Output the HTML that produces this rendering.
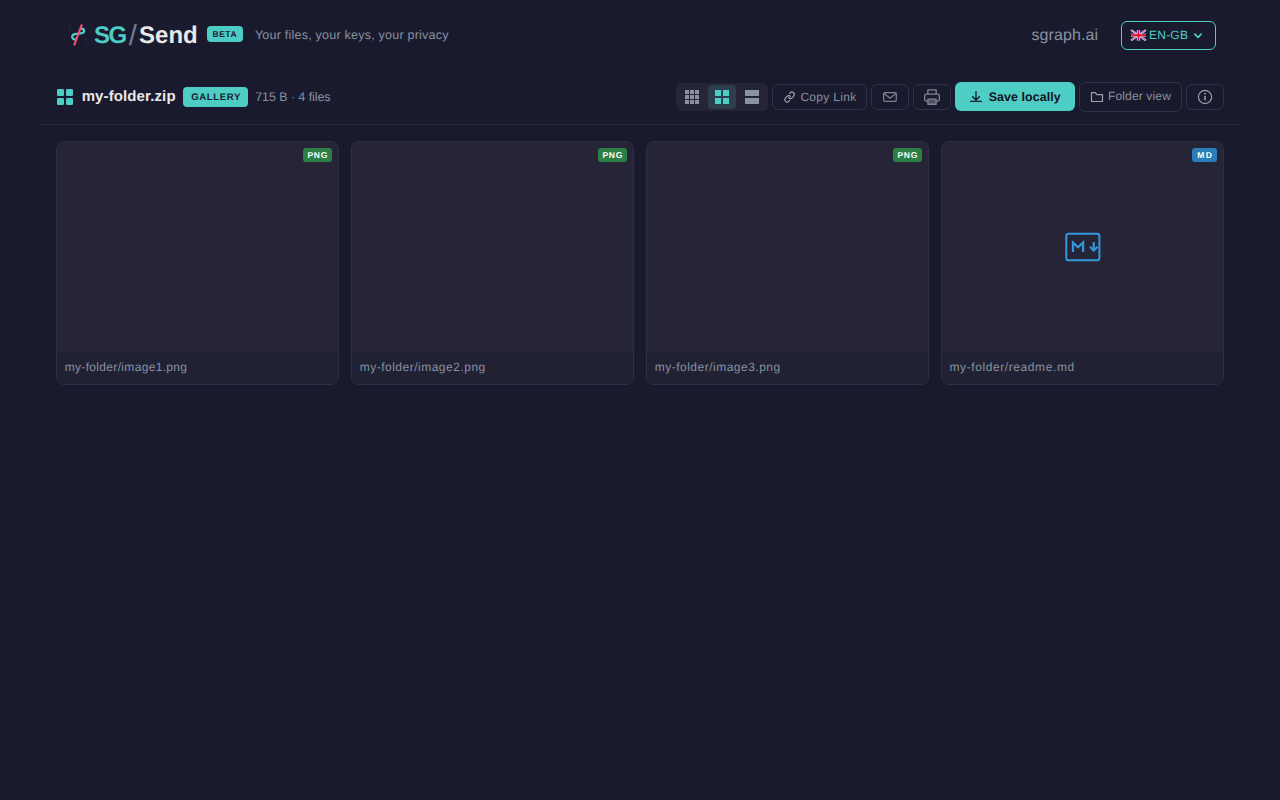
<!DOCTYPE html>
<html lang="en-GB">
<head>
<meta charset="utf-8">
<title>SG/Send</title>
<style>
*{box-sizing:border-box;margin:0;padding:0}
html,body{width:1280px;height:800px;overflow:hidden}
body{background:#1a1a2e;color:#8892a0;font-family:"Liberation Sans",sans-serif;position:relative;text-rendering:geometricPrecision}
.abs{position:absolute}
.t{position:absolute;white-space:nowrap;line-height:1;display:block}
svg{display:block;position:absolute;overflow:visible}
#beta{left:207px;top:26px;width:36px;height:16px;background:#4ecdc4;border-radius:4px}
#lang{left:1121px;top:21px;width:95px;height:29px;border:1px solid #4ecdc4;border-radius:6px}
#gallery{left:183px;top:87px;width:65px;height:20px;background:#4ecdc4;border-radius:4px}
#viewsw{left:676px;top:83px;width:92px;height:28px;background:#252537;border-radius:6px}
#viewact{left:708px;top:85px;width:28px;height:24px;background:#2c3e4c;border-radius:4px}
.btn{border:1px solid #303146;border-radius:6px}
#copy{left:772px;top:84px;width:95px;height:26px}
#mail{left:871px;top:84px;width:38px;height:26px}
#print{left:913px;top:84px;width:38px;height:26px}
#save{left:955px;top:82px;width:120px;height:29px;background:#4ecdc4;border-radius:6px}
#folder{left:1079px;top:82px;width:103px;height:30px}
#info{left:1186px;top:84px;width:38px;height:26px}
#divider{left:40px;top:124px;width:1200px;height:1px;background:#2b2b40}
.card{position:absolute;top:141px;width:283px;height:244px;border:1px solid #2e2e44;border-radius:8px;background:#252537;overflow:hidden}
.card .foot{position:absolute;left:0;right:0;bottom:0;height:32px;background:#212134}
.tag{position:absolute;top:148px;height:14px;border-radius:3px}
.tag.png{background:#2d8045;width:29px}
.tag.md{background:#2980b9;width:25px;left:1192px}
</style>
</head>
<body>
<!-- header -->
<svg style="left:62px;top:19px" width="32" height="32" viewBox="0 0 32 32" fill="none">
<rect x="2.500" y="2.500" width="27" height="27" rx="6" stroke="#1c1c32" stroke-width="1"/>
<path d="M18.800 10A2.200 2.200 0 1 1 19.900 14.100L12.800 15.200A2.600 2.600 0 1 0 14.100 20.050" stroke="#4ecdc4" stroke-width="2.300" stroke-linecap="round" stroke-linejoin="round"/>
<line x1="19.900" y1="5.400" x2="12.100" y2="26.400" stroke="#fb4d6b" stroke-width="2"/>
<g fill="#2c2d43"><rect x="7" y="7.400" width="2" height="1.400"/><rect x="7" y="11" width="2" height="1.400"/><rect x="23" y="19.900" width="2" height="1.400"/><rect x="23" y="23.200" width="2" height="1.400"/></g>
</svg>
<span class="t " id="t-sg" style="left:94.03px;top:24.00px;font-size:24px;letter-spacing:-1.632px;font-weight:700;color:#4ecdc4;">SG</span><span class="t " id="t-slash" style="left:128.65px;top:22.00px;font-size:29px;letter-spacing:5.065px;color:#747d8d;">/</span><span class="t " id="t-send" style="left:139.09px;top:24.00px;font-size:24px;letter-spacing:-0.018px;font-weight:700;color:#e8e8e8;">Send</span>
<div class="abs" id="beta"></div><span class="t " id="t-beta" style="left:212.47px;top:30.00px;font-size:8.5px;letter-spacing:0.538px;font-weight:700;color:#1a1a2e;">BETA</span>
<span class="t " id="t-tagline" style="left:254.92px;top:29.00px;font-size:12.5px;letter-spacing:0.230px;">Your files, your keys, your privacy</span>
<span class="t " id="t-site" style="left:1031.56px;top:28.00px;font-size:16px;letter-spacing:0.073px;">sgraph.ai</span>
<div class="abs" id="lang"></div>
<svg style="left:1131.100px;top:29.600px" width="15" height="10.500" viewBox="0 0 15 10.800" preserveAspectRatio="none"><g><rect width="15" height="10.800" fill="#0c2486"/><path d="M0 0L15 10.800M15 0L0 10.800" stroke="#f3dfe6" stroke-width="1.900"/><path d="M0 0L15 10.800M15 0L0 10.800" stroke="#e2506a" stroke-width=".9"/><path d="M7.500 0V10.800M0 5.400H15" stroke="#f6e6ea" stroke-width="3.200"/><path d="M0 5.400H15" stroke="#d8102a" stroke-width="2.200"/><path d="M7.500 0V10.800" stroke="#d8102a" stroke-width="1.700"/></g></svg>
<span class="t " id="t-lang" style="left:1149.10px;top:29.00px;font-size:12px;letter-spacing:0.197px;color:#4ecdc4;">EN-GB</span>
<svg style="left:1193px;top:32px" width="10" height="8" viewBox="0 0 10 8" fill="none"><path d="M1.800 2.200L5 5.300L8.200 2.200" stroke="#4ecdc4" stroke-width="1.700" stroke-linecap="round" stroke-linejoin="round"/></svg>

<!-- toolbar -->
<svg style="left:57px;top:89px" width="16" height="16" viewBox="0 0 16 16" fill="#4ecdc4"><rect x="0" y="0" width="7" height="7" rx="1.300"/><rect x="9" y="0" width="7" height="7" rx="1.300"/><rect x="0" y="9" width="7" height="7" rx="1.300"/><rect x="9" y="9" width="7" height="7" rx="1.300"/></svg>
<span class="t " id="t-fname" style="left:81.67px;top:89.00px;font-size:15px;letter-spacing:0.115px;font-weight:700;color:#e8e8e8;">my-folder.zip</span>
<div class="abs" id="gallery"></div><span class="t " id="t-gallery" style="left:191.24px;top:93.00px;font-size:9.6px;letter-spacing:0.610px;font-weight:700;color:#1a1a2e;">GALLERY</span>
<span class="t " id="t-meta" style="left:255.22px;top:91.00px;font-size:12.5px;letter-spacing:-0.078px;">715 B · 4 files</span>

<div class="abs" id="viewsw"></div><div class="abs" id="viewact"></div>
<svg style="left:685px;top:90px" width="14" height="14" viewBox="0 0 14 14" fill="#8b92a3"><rect x="0" y="0" width="4" height="4"/><rect x="5" y="0" width="4" height="4"/><rect x="10" y="0" width="4" height="4"/><rect x="0" y="5" width="4" height="4"/><rect x="5" y="5" width="4" height="4"/><rect x="10" y="5" width="4" height="4"/><rect x="0" y="10" width="4" height="4"/><rect x="5" y="10" width="4" height="4"/><rect x="10" y="10" width="4" height="4"/></svg>
<svg style="left:715px;top:90px" width="14" height="14" viewBox="0 0 14 14" fill="#4ecdc4"><rect x="0" y="0" width="6" height="6"/><rect x="8" y="0" width="6" height="6"/><rect x="0" y="8" width="6" height="6"/><rect x="8" y="8" width="6" height="6"/></svg>
<svg style="left:745px;top:90px" width="14" height="14" viewBox="0 0 14 14" fill="#8b92a3"><rect x="0" y="0" width="14" height="6"/><rect x="0" y="8" width="14" height="6"/></svg>

<div class="abs btn" id="copy"></div>
<svg style="left:784.300px;top:91px" width="11.200" height="12.200" viewBox="0 0 24 24" preserveAspectRatio="none" fill="none" stroke="#9ea5b6" stroke-width="2.400" stroke-linecap="round" stroke-linejoin="round"><path d="M10 13a5 5 0 0 0 7.540.54l3-3a5 5 0 0 0-7.070-7.070l-1.720 1.710"/><path d="M14 11a5 5 0 0 0-7.540-.54l-3 3a5 5 0 0 0 7.070 7.070l1.710-1.710"/></svg>
<span class="t " id="t-copy" style="left:800.39px;top:91.00px;font-size:12px;letter-spacing:0.318px;">Copy Link</span>
<div class="abs btn" id="mail"></div>
<svg style="left:882px;top:90px" width="16" height="14" viewBox="0 0 16 14" fill="none" stroke="#7e8496" stroke-width="1.200" stroke-linecap="round" stroke-linejoin="round"><rect x="1.650" y="2.550" width="12.650" height="8.800" rx="1.400"/><path d="M2.100 3.500L7.900 8.200L13.850 3.500"/></svg>
<div class="abs btn" id="print"></div>
<svg style="left:924px;top:89px" width="16" height="16" viewBox="0 0 16 16" fill="none" stroke="#7e8496" stroke-width="1.300" stroke-linecap="round" stroke-linejoin="round"><path d="M3.850 4.700V.850h8.300V4.700"/><path d="M3.850 12.050H2.150a1.500 1.500 0 0 1-1.500-1.500V6.550a1.500 1.500 0 0 1 1.500-1.500h11.700a1.500 1.500 0 0 1 1.500 1.500v4a1.500 1.500 0 0 1-1.500 1.500H12.150"/><rect x="3.850" y="10.150" width="8.300" height="5.100" fill="#4d5163"/></svg>
<div class="abs" id="save"></div>
<svg style="left:970px;top:90px" width="12" height="13" viewBox="0 0 12 13" fill="none" stroke="#1a1a2e" stroke-width="1.350" stroke-linecap="round" stroke-linejoin="round"><path d="M6 1.600V9.800M2.600 6.700L6 10.100L9.400 6.700M.7 11.400H11.300"/></svg>
<span class="t " id="t-save" style="left:988.69px;top:91.00px;font-size:12.4px;letter-spacing:0.095px;font-weight:700;color:#12121f;">Save locally</span>
<div class="abs btn" id="folder"></div>
<svg style="left:1090px;top:91px" width="14" height="12" viewBox="0 0 14 12" fill="none" stroke="#9aa0b2" stroke-width="1.200" stroke-linejoin="round"><path d="M1.500 1.600h3.700l1.700 2h5.600v6.900h-11z"/></svg>
<span class="t " id="t-folder" style="left:1107.96px;top:90.00px;font-size:12px;letter-spacing:0.152px;">Folder view</span>
<div class="abs btn" id="info"></div>
<svg style="left:1197px;top:89px" width="16" height="16" viewBox="0 0 16 16" fill="none" stroke="#9aa0b2" stroke-width="1.200"><circle cx="8" cy="8" r="6.600"/><path d="M8 7v4.300" stroke-width="1.500"/><circle cx="8" cy="4.700" r=".9" fill="#9aa0b2" stroke="none"/></svg>
<div class="abs" id="divider"></div>

<!-- cards -->
<div class="card" style="left:56px"><div class="foot"></div></div>
<div class="card" style="left:351px"><div class="foot"></div></div>
<div class="card" style="left:646px"><div class="foot"></div></div>
<div class="card" style="left:941px"><div class="foot"></div></div>
<div class="tag png" style="left:303px"></div><span class="t " id="t-png1" style="left:307.39px;top:151.00px;font-size:8.5px;letter-spacing:0.821px;font-weight:700;color:#ffffff;">PNG</span>
<div class="tag png" style="left:598px"></div><span class="t " id="t-png2" style="left:602.39px;top:151.00px;font-size:8.5px;letter-spacing:0.821px;font-weight:700;color:#ffffff;">PNG</span>
<div class="tag png" style="left:893px"></div><span class="t " id="t-png3" style="left:897.39px;top:151.00px;font-size:8.5px;letter-spacing:0.821px;font-weight:700;color:#ffffff;">PNG</span>
<div class="tag md"></div><span class="t " id="t-md" style="left:1197.34px;top:151.00px;font-size:8.5px;letter-spacing:1.327px;font-weight:700;color:#ffffff;">MD</span>
<svg style="left:1064px;top:231px" width="38" height="32" viewBox="0 0 38 32" fill="none" stroke="#3498db" stroke-width="2"><rect x="2.300" y="2.700" width="33.100" height="26.600" rx="2.400"/><path d="M8.980 21.070V11.500L14.030 16.300L19.080 11.500V21.070" stroke-width="2.250" stroke-linejoin="miter" stroke-miterlimit="10"/><path d="M29.760 10.980V19.600M25.960 15.800L29.760 19.600L33.560 15.800" stroke-width="2.100" stroke-linejoin="miter"/></svg>
<span class="t " id="t-f1" style="left:64.68px;top:361.00px;font-size:12px;letter-spacing:0.332px;">my-folder/image1.png</span>
<span class="t " id="t-f2" style="left:359.68px;top:361.00px;font-size:12px;letter-spacing:0.501px;">my-folder/image2.png</span>
<span class="t " id="t-f3" style="left:654.76px;top:361.00px;font-size:12px;letter-spacing:0.493px;">my-folder/image3.png</span>
<span class="t " id="t-f4" style="left:949.50px;top:361.00px;font-size:12px;letter-spacing:0.589px;">my-folder/readme.md</span>
</body>
</html>
